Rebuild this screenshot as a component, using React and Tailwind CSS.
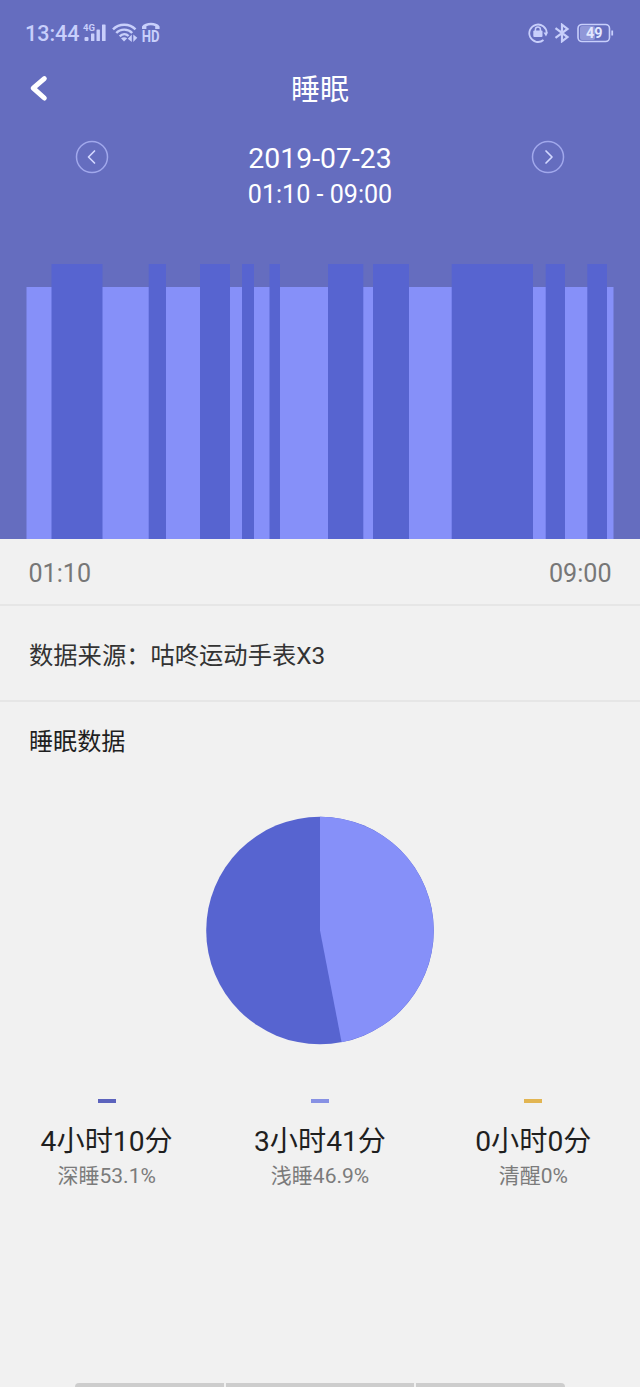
import { ChevronLeft, ChevronRight } from 'lucide-react'

// [start, end] of each deep sleep stretch in px, the night runs from 26.5 to 613.5
const deepSleep = [
  [51.5, 102.5],
  [148.7, 166],
  [200, 230],
  [242, 254],
  [269.5, 280],
  [328, 363.3],
  [373, 409],
  [451.7, 533],
  [545.7, 565],
  [587.3, 607]
]

const summary = [
  { time: '4小时10分', label: '深睡53.1%', color: 'bg-[#5c63bd]' },
  { time: '3小时41分', label: '浅睡46.9%', color: 'bg-[#8791e4]' },
  { time: '0小时0分', label: '清醒0%', color: 'bg-[#e2b552]' }
]

function StatusBar() {
  return (
    <div className="flex h-[66px] items-center justify-between pl-[25px] pr-[26px] text-[#c8cffb]">
      <div className="flex items-center">
        <span className="w-[54px] whitespace-nowrap pt-[2px] text-[21.5px] font-medium leading-none">13:44</span>
        <svg className="ml-1 h-[26px] w-[24px]" viewBox="0 -2 24 26" fill="currentColor">
          <text x="0" y="8.5" fontSize="9.5" fontWeight="700" fontFamily="Roboto, sans-serif">4G</text>
          <rect x="1.5" y="15" width="4" height="4" rx="1" />
          <rect x="8" y="11.5" width="3.4" height="7.5" rx="0.6" />
          <rect x="13.5" y="7.5" width="3.4" height="11.5" rx="0.6" />
          <rect x="19" y="2.5" width="3.6" height="16.5" rx="0.6" />
        </svg>
        <svg className="ml-[5px] h-[22px] w-[26px]" viewBox="0 0 26 22" fill="none" stroke="currentColor" strokeWidth="2.4">
          <path d="M1 7.4C7 1.2 17.5 1.2 23.5 7.4" />
          <path d="M4.3 11C8.5 6.5 16 6.5 20.2 11" />
          <path d="M7.7 14.3C10.5 11.5 14 11.5 16.6 14" />
          <path d="M9 16.3Q12.2 14 15.2 16.3L12 19.4Z" fill="currentColor" stroke="none" />
          <path d="M19.8 12.5V20L15.8 16.8ZM21.3 12.5V20L25.3 15.8Z" fill="currentColor" stroke="none" />
        </svg>
        <svg className="ml-[3px] h-[28px] w-[22px]" viewBox="0 -3 22 28" fill="currentColor">
          <path d="M1 7V4.4C4-.6 16-.6 18.6 4.4V7H14.2V4.2C11.5 3 8 3 5.4 4.2V7Z" />
          <text x="0.8" y="19.8" fontSize="16" fontWeight="700" fontFamily="Roboto, sans-serif" textLength="17.8" lengthAdjust="spacingAndGlyphs">HD</text>
        </svg>
      </div>
      <div className="flex items-center">
        <svg className="h-5 w-5" viewBox="0 0 20 20" fill="none" stroke="currentColor" strokeWidth="1.8">
          <path d="M15.5 17A8.7 8.7 0 1 1 18.7 10" />
          <path d="M15.5 9.5H20L18 13.5Z" fill="currentColor" stroke="none" />
          <rect x="5.3" y="7.6" width="9.2" height="6.4" rx="1" fill="currentColor" stroke="none" />
          <path d="M7.4 9V6.6a2.5 2.5 0 0 1 5 0V9" strokeWidth="1.5" />
        </svg>
        <svg className="ml-[6px] h-5 w-4" viewBox="0 0 16 20" fill="none" stroke="currentColor" strokeWidth="2.2">
          <path d="M1.5 5.2L13.5 14L8 18.3V1.7L13.5 6L1.5 14.8" />
        </svg>
        <svg className="ml-[7px] h-5 w-[37px]" viewBox="0 0 37 20" fill="none" stroke="currentColor">
          <rect x="3" y="3" width="15" height="14" rx="2" fill="#9097d8" stroke="none" />
          <rect x="1" y="1.5" width="31.5" height="17" rx="4" strokeWidth="1.6" />
          <path d="M35.2 7.5V12.5" strokeWidth="1.8" />
          <text x="9" y="14.7" fill="#e2e7ff" stroke="none" fontSize="14" fontWeight="700" fontFamily="Roboto, sans-serif" textLength="16.5" lengthAdjust="spacingAndGlyphs">49</text>
        </svg>
      </div>
    </div>
  )
}

function SleepChart() {
  return (
    <svg className="block h-[275px] w-[640px]" viewBox="0 0 640 275">
      <rect x="26.5" y="23" width="587" height="252" fill="#8690f9" />
      {deepSleep.map(([start, end]) => (
        <rect key={start} x={start} width={end - start} height="275" fill="#5764d0" />
      ))}
    </svg>
  )
}

function SleepPie() {
  return (
    <svg className="mx-auto h-[229px] w-[228px]" viewBox="-114 -114.5 228 229">
      <circle r="113.8" fill="#5764d0" />
      <path d="M0 0V-113.8A113.8 113.8 0 0 1 21.6 111.7Z" fill="#8690f9" />
    </svg>
  )
}

export default function App() {
  return (
    <div className="flex h-[1387px] w-[640px] flex-col overflow-hidden bg-[#f1f1f1] font-['Roboto','Noto_Sans_CJK_SC',sans-serif] text-[#1f1f1f]">
      <header className="h-[539px] shrink-0 bg-[#656dbf] text-white">
        <StatusBar />
        <div className="grid h-[46px] grid-cols-3 items-center px-[29px]">
          <svg className="h-[28px] w-[20px]" viewBox="0 0 20 28" fill="none" stroke="currentColor" strokeWidth="5">
            <path d="M15.3 3.6L4.2 13.1L15.3 23" strokeLinecap="round" strokeLinejoin="round" />
          </svg>
          <h1 className="pt-px text-center text-[29px] leading-[44px]">睡眠</h1>
        </div>
        <div className="flex h-[152px] items-start justify-between px-[75px] pt-[28px]">
          <svg className="h-[34px] w-[34px]" viewBox="0 0 34 34" fill="none">
            <circle cx="17" cy="17" r="15.5" stroke="#a1a8ec" strokeWidth="1.5" />
            <ChevronLeft x="4.5" y="5" size={24} color="#d2d7ff" strokeWidth={1.7} />
          </svg>
          <div className="pt-px text-center">
            <div className="text-[28.4px] leading-[36px]">2019-07-23</div>
            <div className="text-[25.1px] leading-[36px]">01:10 - 09:00</div>
          </div>
          <svg className="h-[34px] w-[34px]" viewBox="0 0 34 34" fill="none">
            <circle cx="17" cy="17" r="15.5" stroke="#a1a8ec" strokeWidth="1.5" />
            <ChevronRight x="6" y="5" size={24} color="#d2d7ff" strokeWidth={1.7} />
          </svg>
        </div>
        <SleepChart />
      </header>

      <div className="flex h-[67px] shrink-0 items-center justify-between border-b-2 border-[#e6e6e6] px-[28.5px] pt-[5px] text-[25.1px] text-[#777]">
        <span>01:10</span>
        <span>09:00</span>
      </div>
      <div className="flex h-[96px] shrink-0 items-center border-b-2 border-[#e6e6e6] px-[29px] pt-[6px] text-[24.3px] text-[#333]">
        数据来源：咕咚运动手表X3
      </div>

      <h2 className="mt-[22px] px-[29px] text-[24.1px] leading-[36px]">睡眠数据</h2>
      <div className="mt-[56px] flex">
        <SleepPie />
      </div>

      <div className="mt-[54px] grid grid-cols-3">
        {summary.map((item) => (
          <div key={item.label} className="flex flex-col items-center">
            <div className={`h-1 w-[18px] ${item.color}`} />
            <div className="mt-[18px] text-[28.2px] leading-[42px]">{item.time}</div>
            <div className="-mt-px text-[21px] leading-[28px] text-[#7b7b7b]">{item.label}</div>
          </div>
        ))}
      </div>

      <div className="mt-auto flex h-1 shrink-0 gap-[2px] px-[75px]">
        <div className="w-[149px] rounded-tl bg-[#cdcdcd]" />
        <div className="w-[189px] bg-[#cdcdcd]" />
        <div className="w-[149px] rounded-tr bg-[#cdcdcd]" />
      </div>
    </div>
  )
}
